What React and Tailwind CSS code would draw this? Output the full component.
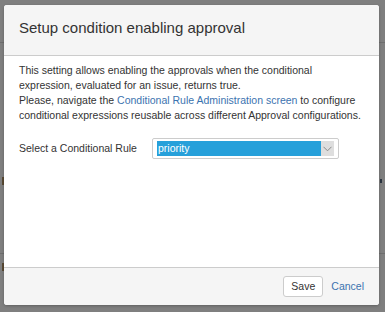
const Chevron = () => (
  <svg width="9" height="6" viewBox="0 0 9 6" fill="none">
    <path d="M0.5 0.8 L4.5 4.8 L8.5 0.8" stroke="#8a8a8a" strokeWidth="1" />
  </svg>
);

const App = () => {
  return (
    <div
      className="relative w-[385px] h-[312px] overflow-hidden bg-[#7f7f7f] pt-[5px] pl-[4px]"
      style={{ fontFamily: '"Liberation Sans", Arial, sans-serif' }}
    >
      {/* page behind the overlay */}
      <div className="absolute left-0 right-0 top-[42px] h-px bg-[#6e6e6e]" />
      <div className="absolute left-0 right-0 top-[253px] h-px bg-[#6e6e6e]" />
      <div className="absolute left-[2px] top-[177px] w-[2px] h-[8px] bg-[#5a4a33]" />
      <div className="absolute left-[2px] top-[263px] w-[2px] h-[8px] bg-[#5a4a33]" />
      <div className="absolute left-[380px] top-[179px] w-[2px] h-[4px] bg-[#2b3440]" />

      <div className="relative w-[375px] h-[300px] flex flex-col bg-white rounded-[3px] overflow-hidden shadow-[0_1px_3px_rgba(0,0,0,0.25)]">
        <div className="h-[51px] shrink-0 bg-[#f5f5f5] border-b border-[#cccccc] pl-[15px] pt-[13px]">
          <h2 className="text-[15px] leading-[20px] text-[#333333] font-normal">
            Setup condition enabling approval
          </h2>
        </div>

        <div className="flex-1 px-[15px] pt-[7px] text-[10.5px] leading-[15px] text-[#333333]">
          <p className="whitespace-nowrap">
            This setting allows enabling the approvals when the conditional
            <br />
            expression, evaluated for an issue, returns true.
            <br />
            Please, navigate the{" "}
            <a className="text-[#3b73af]">Conditional Rule Administration screen</a> to configure
            <br />
            conditional expressions reusable across different Approval configurations.
          </p>

          <div className="flex items-center mt-[15px]">
            <label className="w-[133px] shrink-0 whitespace-nowrap">Select a Conditional Rule</label>
            <div className="w-[187px] h-[21px] flex border border-[#cccccc] rounded-[2px] bg-white px-[4px] py-[2px]">
              <div className="flex-1 bg-[#26a0da] text-white leading-[15px] pl-[1px]">priority</div>
              <div className="w-[13px] bg-[#dedede] flex items-center justify-center">
                <Chevron />
              </div>
            </div>
          </div>
        </div>

        <div className="h-[38px] shrink-0 bg-[#f5f5f5] border-t border-[#cccccc] flex items-center justify-end gap-[8px] pr-[15px] text-[10.5px]">
          <button className="w-[40px] h-[21px] bg-white border border-[#cccccc] rounded-[3px] text-[#333333]">
            Save
          </button>
          <a className="text-[#3b73af]">Cancel</a>
        </div>
      </div>
    </div>
  );
};

export default App;
